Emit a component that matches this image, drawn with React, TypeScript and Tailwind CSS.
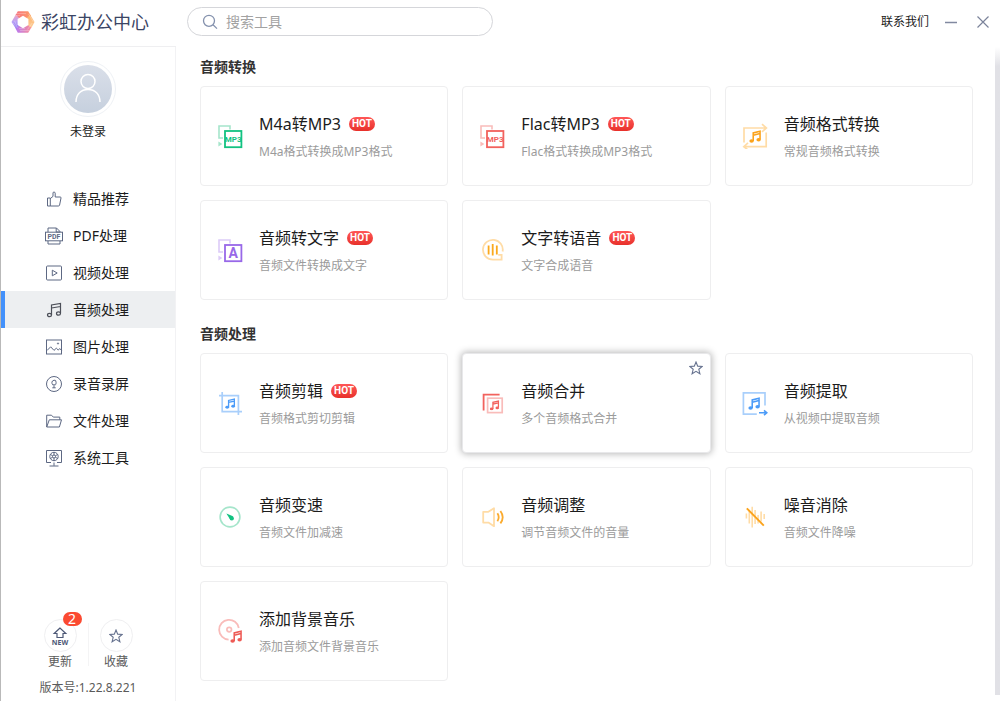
import type { ReactNode } from "react";

const NOTE = "M6.5 17V4.5L17 2v12.5M6.5 8L17 5.5";

function Note({ x, y, size, color }: { x: number; y: number; size: number; color: string }) {
  return (
    <svg x={x} y={y} width={size} height={size} viewBox="0 0 20 20" fill="none" stroke={color} strokeWidth="2.4">
      <path d={NOTE} />
      <ellipse cx="4" cy="17" rx="3.4" ry="2.7" fill={color} stroke="none" />
      <ellipse cx="14.8" cy="15" rx="3.4" ry="2.7" fill={color} stroke="none" />
    </svg>
  );
}

function Box({ children }: { children: ReactNode }) {
  return (
    <svg className="size-[26px] shrink-0" viewBox="0 0 26 26" fill="none" aria-hidden="true">
      {children}
    </svg>
  );
}

function ConvertIcon({ dark, light, label, size }: { dark: string; light: string; label: string; size: number }) {
  return (
    <Box>
      <path d="M6 15H2V3h11v3.5" stroke={light} strokeWidth="1.6" />
      <path d="M1.4 18.5l4 2.4-4 2.6z" fill={light} />
      <rect x="8" y="8" width="16.4" height="16.2" stroke={dark} strokeWidth="1.8" fill="#fff" />
      <text
        x="16.2"
        y={size > 8 ? 21 : 19}
        textAnchor="middle"
        fontFamily="Roboto, sans-serif"
        fontWeight="700"
        fontSize={size}
        fill={dark}
      >
        {label}
      </text>
    </Box>
  );
}

const formatIcon = (
  <Box>
    <path d="M2 19.5V5h22M20 1.2L24.4 5 20 8.8" stroke="#ffdca6" strokeWidth="1.7" />
    <path d="M24.2 9.5V23.6H2M6 19.8L1.8 23.6 6 27" stroke="#ffdca6" strokeWidth="1.7" />
    <Note x={7} y={7} size={13} color="#fba31c" />
  </Box>
);

const speechIcon = (
  <Box>
    <path d="M23.6 14.5A9.9 9.9 0 1 0 14 22.6h8.6v-4.8h-3.4" stroke="#ffdca6" strokeWidth="1.8" />
    <path d="M9.6 8.4v9M13.7 7v11.4M17.8 8.4v9" stroke="#fba91c" strokeWidth="1.8" />
  </Box>
);

const cropIcon = (
  <Box>
    <path d="M2 5.6h19.4V25M5.2 2v19.6H25" stroke="#a9cffb" strokeWidth="1.7" />
    <Note x={8} y={8} size={11} color="#4b9bf8" />
  </Box>
);

const mergeIcon = (
  <Box>
    <path d="M4.6 20.4V4.6h16" stroke="#f2625d" strokeWidth="1.8" />
    <rect x="8.6" y="8.2" width="14.6" height="14.4" stroke="#f9bcba" strokeWidth="1.7" />
    <Note x={10.5} y={10} size={10.5} color="#f2625d" />
  </Box>
);

const extractIcon = (
  <Box>
    <path d="M23 15.5V2.8H1.4v21.4h13.4" stroke="#a9cffb" strokeWidth="1.7" />
    <path d="M17 22.8h7.4M22 20.4l2.8 2.4-2.8 2.4" stroke="#4b9bf8" strokeWidth="1.6" />
    <Note x={6} y={7} size={13} color="#4b9bf8" />
  </Box>
);

const speedIcon = (
  <Box>
    <circle cx="13" cy="13" r="9.9" stroke="#a5e5cb" strokeWidth="1.6" />
    <path d="M9.4 9.6l6.6 2.6-2.4 4z" fill="#12c281" />
    <circle cx="14.8" cy="14.4" r="2.1" fill="#12c281" />
  </Box>
);

const volumeIcon = (
  <Box>
    <path
      d="M4.2 7.8h5.2L15 4.2v18l-5.6-3.6H4.2z"
      stroke="#ffdca6"
      strokeWidth="1.8"
      strokeLinejoin="round"
    />
    <path d="M18.4 9.2q2.6 4 0 8M21.4 7q4.6 6.2 0 12.4" stroke="#fbab2e" strokeWidth="1.8" />
  </Box>
);

const noiseIcon = (
  <Box>
    <path
      d="M4.4 9.4v5M7.3 7v12.4M10.2 2.8v20.6M13.1 6v14M16.1 11v8.4M19.1 7.6v10M22.2 10v5"
      stroke="#ffdca6"
      strokeWidth="1.6"
    />
    <path d="M4.8 4.3l17 17.4" stroke="#fba31c" strokeWidth="1.9" />
  </Box>
);

const discIcon = (
  <Box>
    <path d="M11.6 21.6A9.9 9.9 0 1 1 21.8 10" stroke="#f9bcba" strokeWidth="1.8" />
    <circle cx="12.2" cy="11.6" r="2.3" stroke="#f9bcba" strokeWidth="1.7" />
    <Note x={13} y={12} size={13} color="#ee5a55" />
  </Box>
);

type Tool = { title: string; desc: string; hot?: boolean; active?: boolean; icon: ReactNode };

const sections: { title: string; tools: Tool[] }[] = [
  {
    title: "音频转换",
    tools: [
      {
        title: "M4a转MP3",
        desc: "M4a格式转换成MP3格式",
        hot: true,
        icon: <ConvertIcon dark="#12c281" light="#a5e5cb" label="MP3" size={8} />,
      },
      {
        title: "Flac转MP3",
        desc: "Flac格式转换成MP3格式",
        hot: true,
        icon: <ConvertIcon dark="#f2625d" light="#f9bcba" label="MP3" size={8} />,
      },
      { title: "音频格式转换", desc: "常规音频格式转换", icon: formatIcon },
      {
        title: "音频转文字",
        desc: "音频文件转换成文字",
        hot: true,
        icon: <ConvertIcon dark="#9868e8" light="#dccbf8" label="A" size={14} />,
      },
      { title: "文字转语音", desc: "文字合成语音", hot: true, icon: speechIcon },
    ],
  },
  {
    title: "音频处理",
    tools: [
      { title: "音频剪辑", desc: "音频格式剪切剪辑", hot: true, icon: cropIcon },
      { title: "音频合并", desc: "多个音频格式合并", active: true, icon: mergeIcon },
      { title: "音频提取", desc: "从视频中提取音频", icon: extractIcon },
      { title: "音频变速", desc: "音频文件加减速", icon: speedIcon },
      { title: "音频调整", desc: "调节音频文件的音量", icon: volumeIcon },
      { title: "噪音消除", desc: "音频文件降噪", icon: noiseIcon },
      { title: "添加背景音乐", desc: "添加音频文件背景音乐", icon: discIcon },
    ],
  },
];

const navItems: { label: string; active?: boolean; icon: ReactNode }[] = [
  {
    label: "精品推荐",
    icon: <path d="M2.5 8h2.8v8H2.5zM5.3 8.6L8 6.4V3q0-1 1-1t1.2 1.2V7h5q1 0 .8 1l-1.4 7q-.2 1-1.2 1H5.3" />,
  },
  {
    label: "PDF处理",
    icon: (
      <>
        <path d="M3 5V1h8.5L15 4.5V5M11.2 1v4H15M3 14v3h12v-3" />
        <rect x=".5" y="5.2" width="17" height="8.6" />
        <text
          x="9"
          y="12.2"
          textAnchor="middle"
          fontFamily="Roboto, sans-serif"
          fontWeight="700"
          fontSize="7"
          fill="#5d6883"
          stroke="none"
        >
          PDF
        </text>
      </>
    ),
  },
  {
    label: "视频处理",
    icon: (
      <>
        <rect x="1.5" y="2" width="15" height="14" rx="1" />
        <path d="M7.3 6.2v5.6L12.2 9z" />
      </>
    ),
  },
  {
    label: "音频处理",
    active: true,
    icon: (
      <>
        <path d="M6.500 14V4L15.500 2.500V12M6.500 7l9-1.500" strokeWidth="1.2" />
        <ellipse cx="4.500" cy="14" rx="2" ry="1.700" strokeWidth="1.2" />
        <ellipse cx="13.500" cy="12.500" rx="2" ry="1.700" strokeWidth="1.2" />
      </>
    ),
  },
  {
    label: "图片处理",
    icon: (
      <>
        <rect x="1.5" y="2" width="15" height="14" />
        <path d="M2 12.5l3.700-3.700 3.300 3.600 2.300-2.200 2 1.900 1.400-1.600 2 2" />
        <circle cx="13" cy="5.5" r=".6" />
      </>
    ),
  },
  {
    label: "录音录屏",
    icon: (
      <>
        <circle cx="9" cy="9" r="7.5" />
        <path d="M9 12.800V10.300M7.300 12.800h3.400M7.700 9.800Q6.900 8.800 6.900 7.300T9 5.200t2.100 2.100-.8 2.500z" />
      </>
    ),
  },
  {
    label: "文件处理",
    icon: <path d="M1.700 15V3.200h4.800l1.800 1.900h6.500v2.700M1.700 15L4.300 7.800h12.200L14.400 15z" />,
  },
  {
    label: "系统工具",
    icon: (
      <>
        <path d="M6 13.500H1.500V1.500h15v12H12M9 13.500v3.300M4.500 17h9" />
        <circle cx="9" cy="7.5" r="4.2" />
        <circle cx="9" cy="7.5" r="1.5" />
        <path d="M9 3.300V6M9 9v2.700M5.300 5.400l2.400 1.400M12.700 5.400l-2.400 1.400M5.300 9.600l2.400-1.400M12.700 9.600l-2.400-1.400" />
      </>
    ),
  },
];

function Star({ className }: { className: string }) {
  return (
    <svg className={className} viewBox="0 0 14 14" fill="none" stroke="#66728f" strokeWidth="1.1" aria-hidden="true">
      <path d="M7 1l1.700 4.100 4.500.3-3.400 2.900 1.100 4.400L7 10.300l-3.900 2.400 1.100-4.400L.8 5.400l4.500-.3z" />
    </svg>
  );
}

function Logo() {
  return (
    <svg className="size-6" viewBox="0 0 24 24" aria-hidden="true">
      <defs>
        <linearGradient id="logo-top" x1="0" y1="0" x2="1" y2="0">
          <stop offset="0" stopColor="#f7707f" />
          <stop offset="1" stopColor="#fd9c66" />
        </linearGradient>
        <linearGradient id="logo-right" x1="0" y1="0" x2="0" y2="1">
          <stop offset="0" stopColor="#fdb06a" />
          <stop offset="1" stopColor="#fdd09a" />
        </linearGradient>
        <linearGradient id="logo-bottom" x1="0" y1="0" x2="1" y2="0">
          <stop offset="0" stopColor="#b678f2" />
          <stop offset="1" stopColor="#fb8d98" />
        </linearGradient>
        <linearGradient id="logo-left" x1="0" y1="0" x2="0" y2="1">
          <stop offset="0" stopColor="#f2a6c0" />
          <stop offset=".5" stopColor="#b9a2f6" />
          <stop offset="1" stopColor="#8b6bf0" />
        </linearGradient>
      </defs>
      <path d="M6.800 1.200H17.200L20 6l-8 6-8-6z" fill="url(#logo-top)" />
      <path d="M19 4.500L23.500 12 20 18.500 12 12z" fill="url(#logo-right)" />
      <path d="M20.300 17.500l-3.100 5.300H6.800L4.500 18.500 12 12z" fill="url(#logo-bottom)" />
      <path d="M5 18.800L.5 12l4.300-7.500L12 12z" fill="url(#logo-left)" />
      <path
        d="M5 3.600h10M4 5.600h5M1.800 12.800l4.200 5M3.600 10.800l2.800 6.800M9 20.600h9M8 18.600h6M17.600 4l4.800 8M16.600 19.400l4.600-6.400"
        stroke="#fff"
        strokeOpacity=".4"
        strokeWidth=".7"
        fill="none"
      />
      <path d="M12 5.800l5.400 3.100v6.200L12 18.200l-5.400-3.100V8.900z" fill="#fff" />
    </svg>
  );
}

function ToolCard({ tool }: { tool: Tool }) {
  return (
    <div
      className={
        tool.active
          ? "relative rounded border border-[#e8e8ea] bg-white shadow-[0_0_7px_1px_rgba(0,0,0,0.28)]"
          : "relative rounded border border-[#eeeeef] bg-white"
      }
    >
      <button type="button" className="flex h-[98px] w-full items-center gap-4 pl-4 text-left">
        {tool.icon}
        <span className="flex flex-col gap-2">
          <span className="flex items-center gap-2 text-base leading-6 text-[#1c1c1c]">
            {tool.title}
            {tool.hot && (
              <span className="h-3.5 w-[26px] rounded-full bg-linear-to-b from-[#ff5656] to-[#e8302a] text-center font-[Roboto,sans-serif] text-[10px] leading-[14px] font-bold text-white">
                HOT
              </span>
            )}
          </span>
          <span className="text-xs leading-4 text-[#9b9b9b]">{tool.desc}</span>
        </span>
      </button>
      {tool.active && (
        <button type="button" aria-label="收藏" className="absolute top-[7px] right-[7px]">
          <Star className="size-3.5" />
        </button>
      )}
    </div>
  );
}

export default function App() {
  return (
    <div className="flex min-h-screen border-l border-[#b9b9b9] bg-white font-['Noto_Sans','Noto_Sans_CJK_SC',sans-serif] text-[#1c1c1c]">
      <aside className="flex w-[175px] shrink-0 flex-col">
        <div className="flex h-[47px] items-center gap-1.5 border-b border-[#efeff1] pb-[3px] pl-[10px]">
          <Logo />
          <h1 className="text-lg leading-6 whitespace-nowrap text-[#3b4564]">彩虹办公中心</h1>
        </div>
        <div className="flex grow flex-col border-r border-[#f2f2f4]">
          <div className="flex flex-col items-center gap-[7px] pt-[14px]">
            <div className="flex size-14 items-center justify-center rounded-full border border-[#eef1f5]">
              <div className="flex size-12 items-center justify-center rounded-full bg-linear-to-b from-[#dadfe9] to-[#c6d0de]">
                <svg className="size-8" viewBox="0 0 32 32" fill="none" stroke="#fff" strokeWidth="1.5" aria-hidden="true">
                  <circle cx="16" cy="8.500" r="7" />
                  <path d="M4 29c0-8 5-12.500 12-12.500S28 21 28 29" />
                </svg>
              </div>
            </div>
            <button type="button" className="text-xs leading-4">
              未登录
            </button>
          </div>
          <nav className="mt-10 flex flex-col">
            {navItems.map((item) => (
              <a
                key={item.label}
                href="#"
                aria-current={item.active ? "page" : undefined}
                className={
                  item.active
                    ? "flex h-[37px] items-center gap-2.5 border-l-4 border-[#4391fb] bg-[#edeff1] pl-10 text-sm"
                    : "flex h-[37px] items-center gap-2.5 border-l-4 border-transparent pl-10 text-sm"
                }
              >
                <svg
                  className="size-[18px]"
                  viewBox="0 0 18 18"
                  fill="none"
                  stroke={item.active ? "#4c4f58" : "#5d6883"}
                  strokeWidth="1"
                  aria-hidden="true"
                >
                  {item.icon}
                </svg>
                {item.label}
              </a>
            ))}
          </nav>
          <div className="mt-auto flex flex-col items-center gap-2.5 pt-4 pb-[5px] text-xs leading-4 text-[#5a5a5a]">
            <div className="flex gap-[11px]">
              <button type="button" className="flex flex-col items-center gap-0.5">
                <span className="relative flex size-[33px] items-center justify-center rounded-full border border-[#efeff1]">
                  <svg className="size-[18px]" viewBox="0 0 18 18" fill="none" stroke="#4d5876" strokeWidth="1.2" aria-hidden="true">
                    <path d="M9 1L3.200 6.500H6V10.500h6V6.500h2.800z" />
                    <text
                      x="9"
                      y="17.5"
                      textAnchor="middle"
                      fontFamily="Noto Sans, sans-serif"
                      fontWeight="700"
                      fontSize="7"
                      fill="#4d5876"
                      stroke="none"
                    >
                      NEW
                    </text>
                  </svg>
                  <span className="absolute -top-2 -right-1.5 h-3.5 w-[19px] rounded-full bg-[#fb4a31] text-center text-sm leading-[14px] text-white">
                    2
                  </span>
                </span>
                更新
              </button>
              <div className="my-1 w-px bg-[#f4f4f5]" />
              <button type="button" className="flex flex-col items-center gap-0.5">
                <span className="flex size-[33px] items-center justify-center rounded-full border border-[#efeff1]">
                  <Star className="size-3.5" />
                </span>
                收藏
              </button>
            </div>
            <p>版本号:1.22.8.221</p>
          </div>
        </div>
      </aside>

      <main className="flex min-w-0 grow flex-col">
        <header className="flex h-[43px] items-center px-[11px]">
          <label className="flex h-[29px] w-[306px] items-center gap-2 rounded-full border border-[#d5d6da] pl-3.5">
            <svg className="size-4 shrink-0" viewBox="0 0 16 16" fill="none" stroke="#8491ad" strokeWidth="1.3" aria-hidden="true">
              <circle cx="7" cy="6.800" r="5.500" />
              <path d="M11 10.800l4 3.800" />
            </svg>
            <input
              type="search"
              aria-label="搜索工具"
              placeholder="搜索工具"
              className="min-w-0 grow bg-transparent text-sm outline-none placeholder:text-[#a2a2a2]"
            />
          </label>
          <a href="#" className="ml-auto text-xs leading-4">
            联系我们
          </a>
          <button type="button" aria-label="最小化" className="ml-4">
            <svg className="size-3" viewBox="0 0 12 12" stroke="#8189a0" strokeWidth="1.5">
              <path d="M0 6.500h12" />
            </svg>
          </button>
          <button type="button" aria-label="关闭" className="ml-5">
            <svg className="size-3" viewBox="0 0 12 12" stroke="#7b839a" strokeWidth="1.2">
              <path d="M.5.5l11 11M11.500.5l-11 11" />
            </svg>
          </button>
        </header>
        <div className="flex grow">
          <div className="flex grow flex-col gap-6 pt-3.5 pr-[22px] pb-5 pl-6">
            {sections.map((section) => (
              <section key={section.title} className="flex flex-col gap-[9px]">
                <h2 className="text-sm leading-5 font-bold text-[#333333]">{section.title}</h2>
                <div className="grid grid-cols-3 gap-3.5">
                  {section.tools.map((tool) => (
                    <ToolCard key={tool.title} tool={tool} />
                  ))}
                </div>
              </section>
            ))}
          </div>
          <div className="mt-1 mb-1.5 w-[5px] bg-linear-to-b from-white via-[#e1e1e6] via-3% to-[#e1e1e6]" />
        </div>
      </main>
    </div>
  );
}
